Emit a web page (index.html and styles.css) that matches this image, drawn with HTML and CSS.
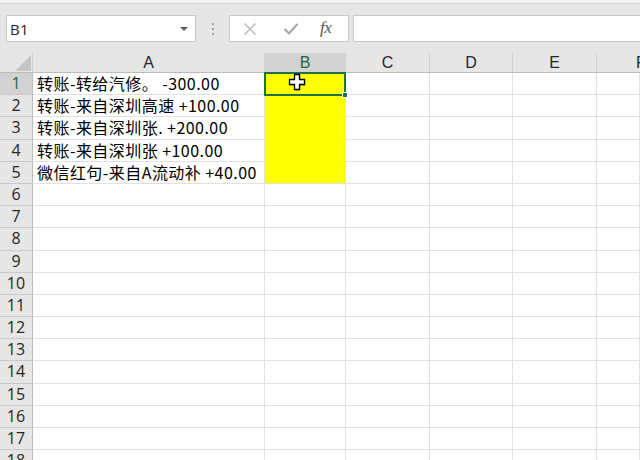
FILE: index.html
```html
<!DOCTYPE html>
<html lang="zh-CN">
<head>
<meta charset="utf-8">
<title>Excel</title>
<link rel="stylesheet" href="styles.css">
</head>
<body>
<div class="app">
  <div class="topstrip"></div>
  <div class="fbar">
    <div class="namebox">
      <span class="nb-text">B1</span>
      <span class="nb-arrow"></span>
    </div>
    <div class="dots"><i></i><i></i><i></i></div>
    <div class="btnbox">
      <svg class="ic-x" width="14" height="14" viewBox="0 0 14 14"><path d="M1.5 1.5 L12.5 12.5 M12.5 1.5 L1.5 12.5" stroke="#b4b4b4" stroke-width="1.4" fill="none"/></svg>
      <svg class="ic-check" width="16" height="14" viewBox="0 0 16 14"><path d="M1.5 7 L6 11.5 L14.5 2" stroke="#a8a8a8" stroke-width="2.2" fill="none"/></svg>
      <span class="fx">fx</span>
    </div>
    <div class="formula"></div>
  </div>

  <div class="sheet">
    <div class="row hdr">
      <div class="corner"><span class="tri"></span></div>
      <div class="ch">A</div>
      <div class="ch sel">B</div>
      <div class="ch">C</div>
      <div class="ch">D</div>
      <div class="ch">E</div>
      <div class="ch last">F</div>
    </div>

    <div class="row">
      <div class="rh sel">1</div>
      <div class="c a">转账-转给汽修。 -300.00</div>
      <div class="c b yl active">
        <span class="selbox"><span class="handle"></span></span>
        <svg class="cursor" width="19" height="19" viewBox="0 0 19 19"><path d="M7.5 2.5h5v5h5v5h-5v5h-5v-5h-5v-5h5z" fill="#7a7a7a" opacity="0.6"/><path d="M6.5 1.5h5v5h5v5h-5v5h-5v-5h-5v-5h5z" fill="#fff" stroke="#000" stroke-width="1.3" stroke-linejoin="miter"/></svg>
      </div>
      <div class="c"></div><div class="c"></div><div class="c"></div><div class="c"></div>
    </div>
    <div class="row">
      <div class="rh">2</div>
      <div class="c a">转账-来自深圳高速 +100.00</div>
      <div class="c b yl"></div>
      <div class="c"></div><div class="c"></div><div class="c"></div><div class="c"></div>
    </div>
    <div class="row">
      <div class="rh">3</div>
      <div class="c a">转账-来自深圳张. +200.00</div>
      <div class="c b yl"></div>
      <div class="c"></div><div class="c"></div><div class="c"></div><div class="c"></div>
    </div>
    <div class="row">
      <div class="rh">4</div>
      <div class="c a">转账-来自深圳张 +100.00</div>
      <div class="c b yl"></div>
      <div class="c"></div><div class="c"></div><div class="c"></div><div class="c"></div>
    </div>
    <div class="row">
      <div class="rh">5</div>
      <div class="c a">微信红句-来自A流动补 +40.00</div>
      <div class="c b yl yl-end"></div>
      <div class="c"></div><div class="c"></div><div class="c"></div><div class="c"></div>
    </div>
    <div class="row"><div class="rh">6</div><div class="c"></div><div class="c"></div><div class="c"></div><div class="c"></div><div class="c"></div><div class="c"></div></div>
    <div class="row"><div class="rh">7</div><div class="c"></div><div class="c"></div><div class="c"></div><div class="c"></div><div class="c"></div><div class="c"></div></div>
    <div class="row"><div class="rh">8</div><div class="c"></div><div class="c"></div><div class="c"></div><div class="c"></div><div class="c"></div><div class="c"></div></div>
    <div class="row"><div class="rh">9</div><div class="c"></div><div class="c"></div><div class="c"></div><div class="c"></div><div class="c"></div><div class="c"></div></div>
    <div class="row"><div class="rh">10</div><div class="c"></div><div class="c"></div><div class="c"></div><div class="c"></div><div class="c"></div><div class="c"></div></div>
    <div class="row"><div class="rh">11</div><div class="c"></div><div class="c"></div><div class="c"></div><div class="c"></div><div class="c"></div><div class="c"></div></div>
    <div class="row"><div class="rh">12</div><div class="c"></div><div class="c"></div><div class="c"></div><div class="c"></div><div class="c"></div><div class="c"></div></div>
    <div class="row"><div class="rh">13</div><div class="c"></div><div class="c"></div><div class="c"></div><div class="c"></div><div class="c"></div><div class="c"></div></div>
    <div class="row"><div class="rh">14</div><div class="c"></div><div class="c"></div><div class="c"></div><div class="c"></div><div class="c"></div><div class="c"></div></div>
    <div class="row"><div class="rh">15</div><div class="c"></div><div class="c"></div><div class="c"></div><div class="c"></div><div class="c"></div><div class="c"></div></div>
    <div class="row"><div class="rh">16</div><div class="c"></div><div class="c"></div><div class="c"></div><div class="c"></div><div class="c"></div><div class="c"></div></div>
    <div class="row"><div class="rh">17</div><div class="c"></div><div class="c"></div><div class="c"></div><div class="c"></div><div class="c"></div><div class="c"></div></div>
    <div class="row"><div class="rh">18</div><div class="c"></div><div class="c"></div><div class="c"></div><div class="c"></div><div class="c"></div><div class="c"></div></div>
  </div>
</div>
</body>
</html>
```

FILE: styles.css
```css
* { box-sizing: border-box; }

html, body {
  margin: 0;
  padding: 0;
  width: 640px;
  height: 460px;
  overflow: hidden;
  background: #ffffff;
}

body {
  font-family: "Noto Sans", "Noto Sans CJK SC", sans-serif;
}

.app {
  display: flex;
  flex-direction: column;
  width: 640px;
  height: 460px;
  overflow: hidden;
}

.topstrip {
  flex-shrink: 0;
  height: 4px;
  background: #f2f2f2;
  border-bottom: 1px solid #d6d6d6;
}

.fbar {
  flex-shrink: 0;
  height: 49px;
  background: #e6e6e6;
  display: flex;
  align-items: flex-start;
  padding: 11px 0 0 6px;
}

.namebox {
  width: 190px;
  height: 27px;
  background: #ffffff;
  border: 1px solid #c8c8c8;
  display: flex;
  align-items: center;
  justify-content: space-between;
  padding: 0 7px 0 3px;
}

.nb-text {
  font-family: "Open Sans", "Noto Sans", sans-serif;
  font-size: 15px;
  color: #262626;
  letter-spacing: 0.2px;
}

.nb-arrow {
  width: 0;
  height: 0;
  border-left: 4px solid transparent;
  border-right: 4px solid transparent;
  border-top: 4px solid #606060;
  margin-top: 1px;
}

.dots {
  width: 33px;
  height: 27px;
  display: flex;
  flex-direction: column;
  align-items: center;
  justify-content: center;
  gap: 3px;
}

.dots i {
  display: block;
  width: 2px;
  height: 2px;
  background: #a0a0a0;
}

.btnbox {
  width: 120px;
  height: 27px;
  background: #ffffff;
  border: 1px solid #c8c8c8;
  display: flex;
  align-items: center;
  padding-left: 13px;
}

.ic-x { margin-right: 26px; }
.ic-check { margin-right: 21px; }

.fx {
  font-family: "Liberation Serif", "DejaVu Serif", serif;
  font-style: italic;
  font-size: 17px;
  color: #595959;
  letter-spacing: -0.5px;
  margin-top: -2px;
}

.formula {
  margin-left: 4px;
  flex: 1;
  height: 27px;
  background: #ffffff;
  border: 1px solid #c8c8c8;
  border-right: none;
}

.sheet {
  flex: 1;
  min-height: 0;
  overflow: hidden;
  display: flex;
  flex-direction: column;
  background: #ffffff;
}

.row {
  display: grid;
  grid-template-columns: 33px 232px 81px 84px 83px 84px 43px;
  height: 22.2px;
  flex-shrink: 0;
}

.row.hdr {
  height: 20px;
  background: #e6e6e6;
  border-bottom: 1px solid #bdbdbd;
}

.corner {
  position: relative;
  border-right: 1px solid #cfcfcf;
}

.tri {
  position: absolute;
  right: 1px;
  bottom: 1px;
  width: 0;
  height: 0;
  border-left: 16px solid transparent;
  border-bottom: 16px solid #c4c4c4;
}

.ch {
  border-right: 1px solid #cfcfcf;
  text-align: center;
  font-family: "Liberation Sans", "Noto Sans", sans-serif;
  font-size: 16px;
  line-height: 19px;
  color: #262626;
}

.ch.last {
  border-right: none;
  text-align: left;
  padding-left: 39px;
  overflow: hidden;
  white-space: nowrap;
}

.ch.sel {
  background: #d2d2d2;
  color: #1e6a43;
}

.rh {
  background: #e6e6e6;
  border-right: 1px solid #bdbdbd;
  border-bottom: 1px solid #cacaca;
  text-align: center;
  font-family: "Open Sans", "Noto Sans", sans-serif;
  font-size: 16px;
  line-height: 21px;
  color: #262626;
}

.rh.sel {
  background: #d2d2d2;
  color: #1e6a43;
}

.c {
  border-right: 1px solid #e1e1e1;
  border-bottom: 1px solid #e1e1e1;
  font-family: "Noto Sans CJK SC", sans-serif;
  font-size: 16px;
  line-height: 21px;
  color: #000000;
  white-space: nowrap;
  overflow: visible;
}

.c.a {
  padding-left: 4px;
  letter-spacing: 0.45px;
  position: relative;
  z-index: 1;
}

.c.yl {
  background: #ffff00;
  border-bottom-color: #ffff00;
}

.c.yl-end {
  border-bottom-color: #e1e1e1;
}

.active {
  position: relative;
}

.selbox {
  position: absolute;
  left: -1px;
  top: -1px;
  width: 82px;
  height: 24px;
  border: 2px solid #217346;
  z-index: 3;
}

.handle {
  position: absolute;
  right: -4px;
  bottom: -4px;
  width: 6px;
  height: 6px;
  background: #217346;
  border: 1px solid #ffffff;
}

.cursor {
  position: absolute;
  left: 23px;
  top: -0.5px;
  z-index: 4;
}
```
